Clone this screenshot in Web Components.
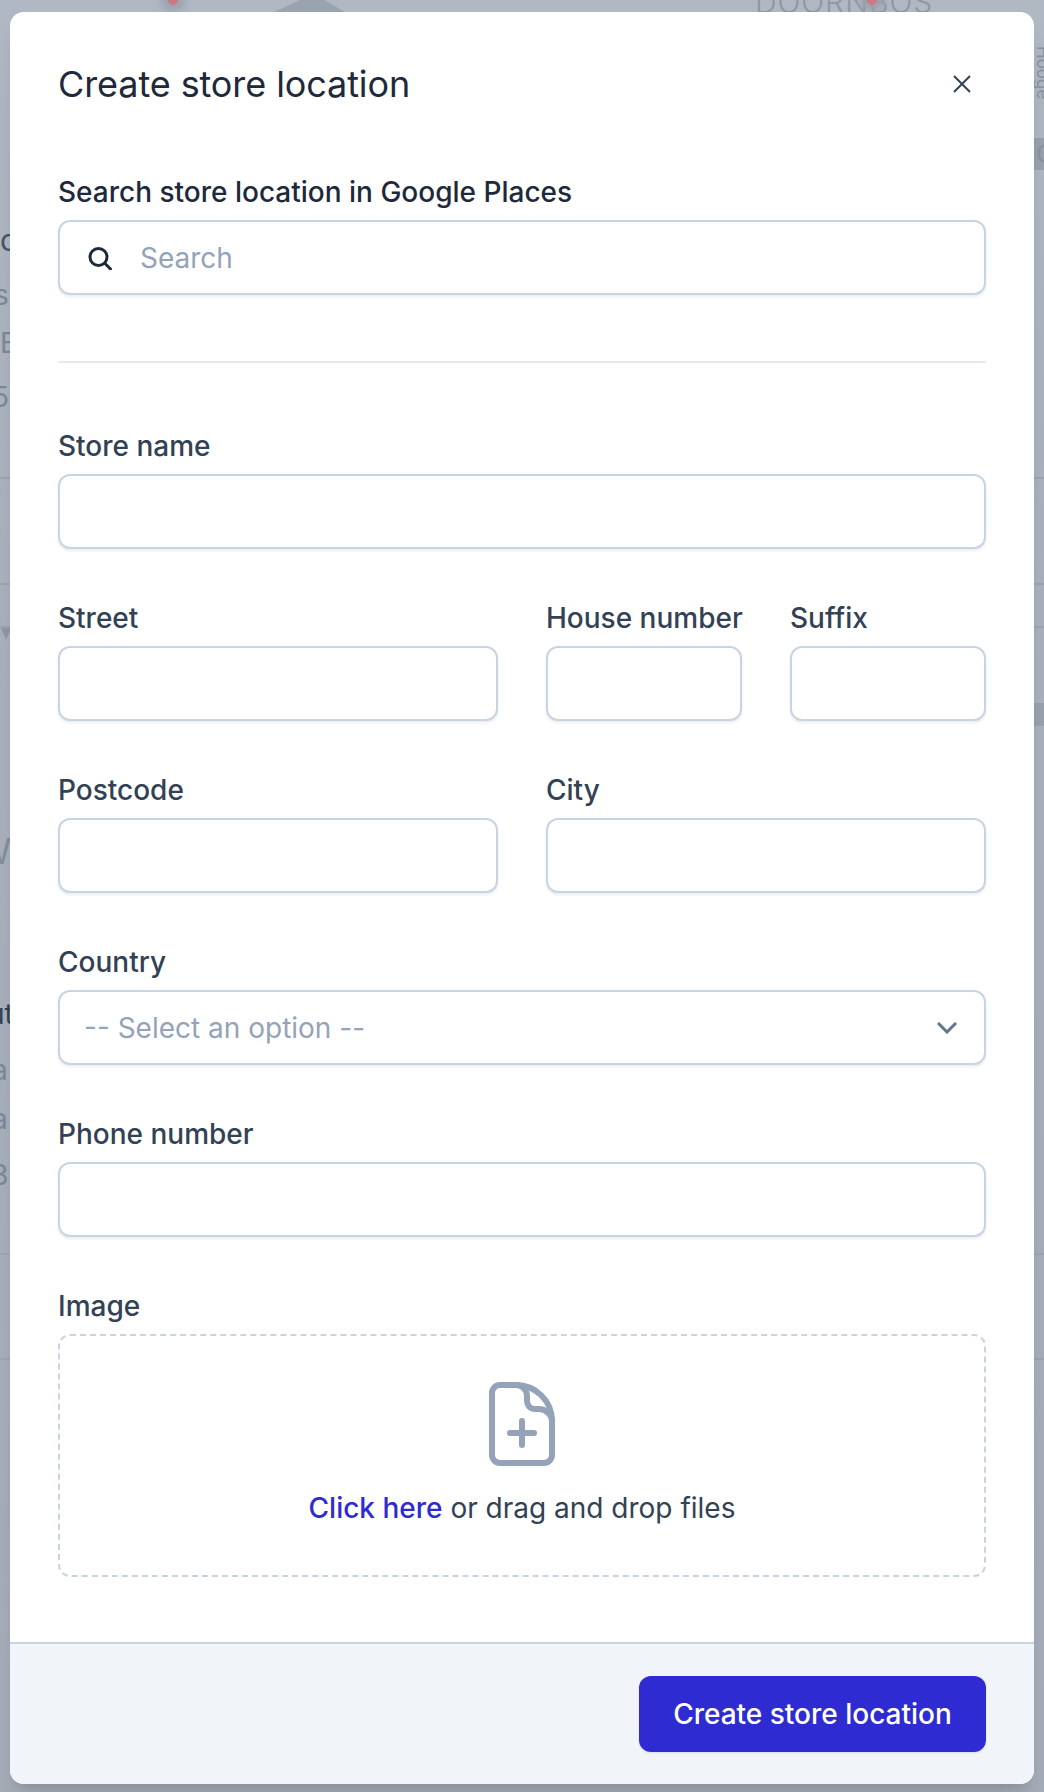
<!DOCTYPE html>
<html lang="en">
<head>
<meta charset="utf-8">
<title>Create store location</title>
<style>
  html, body { margin: 0; height: 100%; }
  body { font-family: Inter, "Liberation Sans", sans-serif; background: #a9b1bd; }
</style>
</head>
<body>
<map-backdrop></map-backdrop>
<store-modal heading="Create store location">
  <form-field label="Search store location in Google Places" strong>
    <text-box>
      <svg slot="icon" width="24" height="24" viewBox="0 0 24 24" fill="none" stroke="#1e293b" stroke-width="3" stroke-linecap="round"><circle cx="10.5" cy="11" r="8.5"/><path d="M17 17.5 22.5 23"/></svg>
      Search
    </text-box>
  </form-field>
  <hr-line></hr-line>
  <form-field label="Store name"><text-box></text-box></form-field>
  <form-row>
    <form-field label="Street"><text-box></text-box></form-field>
    <form-row>
      <form-field label="House number"><text-box></text-box></form-field>
      <form-field label="Suffix"><text-box></text-box></form-field>
    </form-row>
  </form-row>
  <form-row>
    <form-field label="Postcode"><text-box></text-box></form-field>
    <form-field label="City"><text-box></text-box></form-field>
  </form-row>
  <form-field label="Country">
    <text-box chevron>-- Select an option --</text-box>
  </form-field>
  <form-field label="Phone number"><text-box></text-box></form-field>
  <form-field label="Image"><drop-zone></drop-zone></form-field>
  <primary-button slot="footer">Create store location</primary-button>
</store-modal>

<script>
class MapBackdrop extends HTMLElement {
  connectedCallback() {
    const bits = [
      ['c', 0, 222, '#475569', 30], ['s', -6, 279, '#7c8899', 28], ['E', 0, 327, '#7c8899', 28], ['5', -8, 381, '#7c8899', 28],
      ['W', -24, 830, '#858e9c', 36], ['O', 1036, 138, '#8a93a1', 26],
      ['ut', -12, 998, '#334155', 28], ['a', -8, 1054, '#7c8899', 28], ['a', -8, 1103, '#7c8899', 28], ['B', -10, 1159, '#7c8899', 28]
    ].map(([t, x, y, c, s]) => `<span style="left:${x}px;top:${y}px;color:${c};font-size:${s}px">${t}</span>`).join('');
    const lines = [477, 583, 626, 1253, 1358].map(y => `<i style="top:${y}px"></i>`).join('');
    this.attachShadow({ mode: 'open' }).innerHTML = `
      <style>
        :host { position: absolute; inset: 0; overflow: hidden; display: block; font-family: Inter, "Liberation Sans", sans-serif; background: linear-gradient(#b0b8c4 0, #a9b1bd 600px, #a5adb9 1700px); }
        span { position: absolute; line-height: 1.2; }
        i { position: absolute; left: 0; right: 0; height: 2px; background: #9da5b3; }
        .band { position: absolute; right: 0; left: 1030px; top: 138px; height: 32px; background: #99a1ad; }
        .area { position: absolute; right: 0; left: 1030px; top: 703px; height: 23px; background: #99a1ad; }
        .tri { position: absolute; left: 0; width: 12px; top: 626px; height: 14px; background: #8f98a6; clip-path: polygon(0 0, 100% 0, 50% 100%); }
        .town { position: absolute; left: 755px; top: -16px; font-size: 30px; font-weight: 300; letter-spacing: 1px; color: #8e97a5; }
        .pin { position: absolute; width: 10px; height: 10px; top: -5px; border-radius: 50%; background: #cf7680; box-shadow: 0 0 8px 7px #9aa2ae; }
        .road { position: absolute; left: 270px; top: 0; width: 78px; height: 14px; background: #9aa4b1; clip-path: polygon(38% 0, 70% 0, 100% 100%, 0 100%); }
        .side { position: absolute; left: 1033px; top: 46px; font-size: 17px; color: #8a93a1; writing-mode: vertical-rl; }
      </style>
      <div class="road"></div>
      <div class="band"></div><div class="area"></div><div class="tri"></div>
      <div class="town">DOORNBOS</div>
      <div class="side">Hooge</div>
      <div class="pin" style="left:168px"></div><div class="pin" style="left:867px"></div>
      ${lines}${bits}`;
  }
}

class StoreModal extends HTMLElement {
  connectedCallback() {
    this.attachShadow({ mode: 'open' }).innerHTML = `
      <style>
        :host { position: relative; display: flex; flex-direction: column; box-sizing: border-box; margin: 12px 10px 0; width: 1024px; height: 1772px; background: #fff; border-radius: 14px; overflow: hidden; box-shadow: 0 20px 25px -5px rgba(0,0,0,.1), 0 8px 10px -6px rgba(0,0,0,.1); }
        header { display: flex; justify-content: space-between; align-items: center; padding: 48px 48px 0; height: 50px; }
        h2 { margin: -2px 0 0; font-size: 36px; font-weight: 400; letter-spacing: -.1px; color: #1e293b; line-height: 50px; }
        .close { display: flex; margin: -2px 15px 0 0; }
        main { flex: 1; display: flex; flex-direction: column; gap: 48px; padding: 61px 48px 0; }
        footer { display: flex; justify-content: flex-end; background: #f1f4f9; border-top: 2px solid #c9d4e3; padding: 32px 48px; }
      </style>
      <header>
        <h2>${this.getAttribute('heading')}</h2>
        <span class="close"><svg width="18" height="18" viewBox="0 0 18 18" fill="none" stroke="#334155" stroke-width="2"><path d="M1 1 17 17M17 1 1 17"/></svg></span>
      </header>
      <main><slot></slot></main>
      <footer><slot name="footer"></slot></footer>`;
  }
}

class FormField extends HTMLElement {
  connectedCallback() {
    const color = this.hasAttribute('strong') ? '#1e293b' : '#334155';
    this.attachShadow({ mode: 'open' }).innerHTML = `
      <style>
        :host { display: block; min-width: 0; }
        label { display: block; font-size: 28px; line-height: 42px; font-weight: 500; color: ${color}; margin-bottom: 7px; white-space: nowrap; }
      </style>
      <label>${this.getAttribute('label')}</label>
      <slot></slot>`;
  }
}

class FormRow extends HTMLElement {
  connectedCallback() {
    this.attachShadow({ mode: 'open' }).innerHTML = `
      <style>:host { display: grid; grid-template-columns: 1fr 1fr; gap: 48px; }</style>
      <slot></slot>`;
  }
}

class TextBox extends HTMLElement {
  connectedCallback() {
    const chevron = this.hasAttribute('chevron') ? `<svg class="chev" width="20" height="12" viewBox="0 0 20 12" fill="none" stroke="#64748b" stroke-width="3"><path d="M1 1 10 10 19 1"/></svg>` : '';
    this.attachShadow({ mode: 'open' }).innerHTML = `
      <style>
        :host { display: flex; align-items: center; box-sizing: border-box; height: 75px; padding: 0 24px; border: 2px solid #c9d4e3; border-radius: 12px; background: #fff; box-shadow: 0 2px 3px rgba(15,23,42,.08); font-size: 28px; color: #94a3b8; white-space: nowrap; }
        ::slotted(svg) { margin: 0 28px 0 4px; flex: none; }
        .text { flex: 1; }
        .chev { margin-right: 3px; }
      </style>
      <slot name="icon"></slot>
      <span class="text"><slot></slot></span>
      ${chevron}`;
  }
}

class DropZone extends HTMLElement {
  connectedCallback() {
    this.attachShadow({ mode: 'open' }).innerHTML = `
      <style>
        :host { display: flex; flex-direction: column; align-items: center; box-sizing: border-box; height: 243px; padding-top: 46px; border: 2px dashed #c9d4e3; border-radius: 12px; font-size: 28px; line-height: 42px; color: #334155; }
        svg { display: block; margin-bottom: 21px; }
        a { color: #2f2bd2; font-weight: 500; }
      </style>
      <svg width="66" height="84" viewBox="0 0 66 84" fill="none" stroke="#94a3b8" stroke-width="6" stroke-linecap="round" stroke-linejoin="round">
        <path d="M11 3H27C47 3 63 19 63 39V73A8 8 0 0 1 55 81H11A8 8 0 0 1 3 73V11A8 8 0 0 1 11 3Z"/>
        <path d="M27 3C33 3 38 8 38 14V19C38 23 41 27 46 27H50C56 27 63 32 63 39"/>
        <path d="M33 39V63M21 51H45"/>
      </svg>
      <div><a>Click here</a> or drag and drop files</div>`;
  }
}

class HrLine extends HTMLElement {
  connectedCallback() {
    this.attachShadow({ mode: 'open' }).innerHTML = `
      <style>:host { display: block; height: 2px; background: #e5e9f3; margin: 18px 0 14px; }</style>`;
  }
}

class PrimaryButton extends HTMLElement {
  connectedCallback() {
    this.attachShadow({ mode: 'open' }).innerHTML = `
      <style>
        :host { display: flex; align-items: center; justify-content: center; box-sizing: border-box; width: 347px; height: 76px; border-radius: 12px; background: #2f2bd2; color: #fff; font-size: 28px; font-weight: 500; box-shadow: 0 1px 2px rgba(15,23,42,.1); }
      </style>
      <slot></slot>`;
  }
}

customElements.define('map-backdrop', MapBackdrop);
customElements.define('store-modal', StoreModal);
customElements.define('form-field', FormField);
customElements.define('form-row', FormRow);
customElements.define('text-box', TextBox);
customElements.define('drop-zone', DropZone);
customElements.define('hr-line', HrLine);
customElements.define('primary-button', PrimaryButton);
</script>
</body>
</html>
